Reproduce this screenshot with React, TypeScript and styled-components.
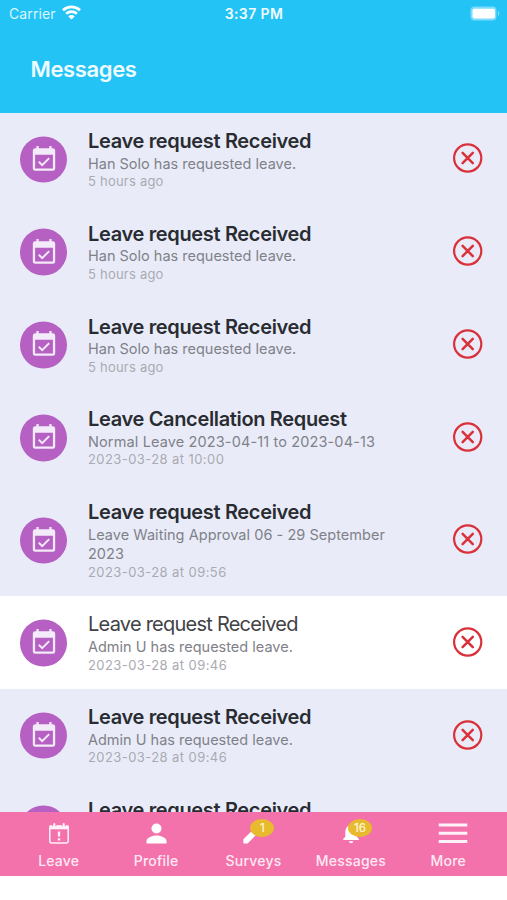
import React from "react";
import styled, { createGlobalStyle } from "styled-components";

const GlobalStyle = createGlobalStyle`
  * { box-sizing: border-box; }
  body { margin: 0; background: #fff; font-family: Inter, "Liberation Sans", sans-serif; }
`;

const Screen = styled.div`
  display: flex;
  flex-direction: column;
  width: 507px;
  height: 900px;
  overflow: hidden;
  background: #fff;
`;

const Header = styled.header`
  flex: none;
  height: 113px;
  background: #23c3f6;
  color: #fff;
`;

const StatusBar = styled.div`
  display: grid;
  grid-template-columns: 1fr auto 1fr;
  align-items: center;
  height: 28px;
  padding: 0 7px 0 9px;
`;

const Carrier = styled.div`
  display: flex;
  align-items: center;
  gap: 6px;
  font-size: 14px;
  line-height: 18px;
  letter-spacing: 0.12px;
  color: #d9f6ff;
  svg { margin-top: -3px; }
`;

const Clock = styled.div`
  margin-left: -1px;
  font-size: 14px;
  line-height: 18px;
  font-weight: 600;
  letter-spacing: 0.4px;
  color: #f1fcff;
`;

const Battery = styled.svg`
  justify-self: end;
  margin-top: -2px;
`;

const PageTitle = styled.h1`
  margin: 27px 0 0 30.5px;
  font-size: 22px;
  line-height: 28px;
  font-weight: 600;
  letter-spacing: -0.36px;
  color: #effcff;
`;

const List = styled.main`
  flex: none;
  height: 699.3px;
  overflow: hidden;
  background: #e9ecf8;
`;

const Row = styled.article<{ $read?: boolean }>`
  display: flex;
  align-items: center;
  padding: 16px 24px 15px 20.4px;
  background: ${(p) => (p.$read ? "#fff" : "#e9ecf8")};
`;

const Avatar = styled.div`
  flex: none;
  display: grid;
  place-items: center;
  width: 46.6px;
  height: 46.6px;
  margin-right: 21px;
  border-radius: 50%;
  background: #b560c2;
  transform: translateY(-0.5px);
  svg { margin-top: -2px; }
`;

const Body = styled.div`
  flex: none;
  width: 320px;
`;

const Title = styled.h2<{ $read?: boolean }>`
  margin: 0;
  font-size: 20px;
  line-height: 24px;
  font-weight: ${(p) => (p.$read ? 400 : 600)};
  letter-spacing: ${(p) => (p.$read ? "-0.76px" : "-0.34px")};
  color: ${(p) => (p.$read ? "#414246" : "#292c32")};
  white-space: nowrap;
`;

const Summary = styled.p<{ $tracking?: number }>`
  margin: 0;
  padding-top: 0.6px;
  font-size: 14.5px;
  line-height: 19.5px;
  letter-spacing: ${(p) => p.$tracking ?? 0}px;
  color: #808188;
`;

const Time = styled.div<{ $dated: boolean }>`
  font-size: 13px;
  line-height: 17.7px;
  letter-spacing: ${(p) => (p.$dated ? "0.42px" : "0.22px")};
  color: #a9aab2;
`;

const Dismiss = styled.button`
  display: block;
  width: 31px;
  height: 31px;
  margin-left: auto;
  padding: 0;
  border: 0;
  background: none;
  transform: translateY(-1.5px);
  svg { display: block; }
`;

const TabBar = styled.nav`
  flex: none;
  display: grid;
  grid-template-columns: repeat(5, 1fr);
  height: 63.4px;
  padding: 0 10px;
  background: #f372ab;
`;

const Tab = styled.div`
  display: flex;
  flex-direction: column;
  align-items: center;
`;

const TabIcon = styled.div<{ $shift?: number }>`
  position: relative;
  height: 38.7px;
  padding-top: 9px;
  margin-left: ${(p) => p.$shift ?? 0}px;
  svg { display: block; }
`;

const TabLabel = styled.span`
  font-size: 14px;
  line-height: 20px;
  font-weight: 500;
  letter-spacing: 0.22px;
  color: #ffe9f3;
`;

const Badge = styled.span`
  position: absolute;
  top: 7px;
  left: 8px;
  width: 24px;
  height: 18px;
  border-radius: 50%;
  background: #e8ba2d;
  color: #fff6d8;
  font-size: 11.5px;
  line-height: 18px;
  font-weight: 500;
  text-align: center;
`;

const WifiIcon = () => (
  <svg width="19" height="15" viewBox="0 0 19 15" fill="none" stroke="#fff" strokeWidth="2.7">
    <path d="M1 5.2C5.8.8 13.2.8 18 5.2" />
    <path d="M4.1 8.7c3.1-2.8 7.7-2.8 10.8 0" />
    <path d="M9.5 14.6 6.3 11.4c1.8-1.8 4.6-1.8 6.4 0z" fill="#fff" stroke="none" />
  </svg>
);

const BatteryIcon = () => (
  <Battery width="30" height="15" viewBox="0 0 30 15">
    <rect x="0.5" y="0.5" width="26" height="14" rx="4" fill="#7bdcfb" />
    <rect x="2.5" y="2.8" width="22.5" height="9.6" rx="2" fill="#fff" />
    <path d="M28 5v5c1.8-.8 1.8-4.2 0-5z" fill="#7bdcfb" />
  </Battery>
);

const CalendarCheckIcon = () => (
  <svg width="24" height="26" viewBox="0 0 24 26" fill="none">
    <path
      fill="#f3eafa"
      fillRule="evenodd"
      d="M4.4.5h2.3v2.3h10.6V.5h2.3v2.3h1.2a2.4 2.4 0 0 1 2.4 2.4v17.7a2.4 2.4 0 0 1-2.4 2.4H3.2a2.4 2.4 0 0 1-2.4-2.4V5.2a2.4 2.4 0 0 1 2.4-2.4h1.2zM3.1 9.2v13.7h17.8V9.2z"
    />
    <path d="m6.8 16.3 3.4 3.3 7-7" stroke="#f3eafa" strokeWidth="2" />
  </svg>
);

const CloseIcon = () => (
  <svg width="31" height="31" viewBox="0 0 31 31" fill="none" stroke="#d9303a" strokeWidth="2.2">
    <circle cx="15.7" cy="15.5" r="13.6" />
    <path d="m10.6 10.4 10.2 10.2m0-10.2L10.6 20.6" strokeWidth="2.5" strokeLinecap="round" />
  </svg>
);

const LeaveIcon = () => (
  <svg width="22" height="26" viewBox="0 0 22 26" fill="none">
    <rect x="1.8" y="5.1" width="18.4" height="16.8" rx="1.7" stroke="#fff2f8" strokeWidth="1.5" />
    <path d="M1.5 4.5h19v3.8h-19z" fill="#fff2f8" />
    <path d="M6.3 2.7v2.6M15.7 2.7v2.6" stroke="#f372ab" strokeWidth="4" />
    <path d="M6.3 3.2v2.4M15.7 3.2v2.4" stroke="#fff2f8" strokeWidth="2.2" strokeLinecap="round" />
    <path d="M11 10.5v5M11 17.3v2.2" stroke="#fff2f8" strokeWidth="2.3" />
  </svg>
);

const ProfileIcon = () => (
  <svg width="22" height="26" viewBox="0 0 22 26" fill="#fff">
    <circle cx="11.5" cy="7.5" r="5" />
    <path d="M1.5 22.5v-2.3c0-3.800 6.700-5.600 10-5.600s10 1.800 10 5.600v2.300z" />
  </svg>
);

const PencilIcon = () => (
  <svg width="22" height="26" viewBox="0 0 22 26" fill="#fff">
    <path d="M1.4 18.2 12.7 6.9l4.2 4.2L5.6 22.4H1.4z" />
    <path d="m14 5.6 2-2 4.2 4.2-2 2z" />
  </svg>
);

const BellIcon = () => (
  <svg width="22" height="26" viewBox="0 0 22 26" fill="#fff">
    <path d="M3.3 18.9v-1.1l2-2v-5c0-3.4 1.9-5.9 4.7-6.6V3.5h2.2v.7c2.8.7 4.6 3.2 4.6 6.6v5l2 2v1.1z" />
    <path d="M9 20.2h4.2c0 2.5-4.2 2.5-4.2 0z" />
  </svg>
);

const MenuIcon = () => (
  <svg width="30" height="26" viewBox="0 0 30 26" stroke="#fff2f8" strokeWidth="3">
    <path d="M.7 4h28.6M.7 12.3h28.6M.7 20.6h28.6" />
  </svg>
);

type Message = { title: string; summary: string; time: string; read?: boolean; tracking?: number };

const received = "Leave request Received";
const messages: Message[] = [
  { title: received, summary: "Han Solo has requested leave.", time: "5 hours ago" },
  { title: received, summary: "Han Solo has requested leave.", time: "5 hours ago" },
  { title: received, summary: "Han Solo has requested leave.", time: "5 hours ago" },
  {
    title: "Leave Cancellation Request",
    summary: "Normal Leave 2023-04-11 to 2023-04-13",
    time: "2023-03-28 at 10:00",
    tracking: 0.13,
  },
  {
    title: received,
    summary: "Leave Waiting Approval 06 - 29 September 2023",
    time: "2023-03-28 at 09:56",
    tracking: 0.04,
  },
  { title: received, summary: "Admin U has requested leave.", time: "2023-03-28 at 09:46", read: true },
  { title: received, summary: "Admin U has requested leave.", time: "2023-03-28 at 09:46" },
  { title: received, summary: "Admin U has requested leave.", time: "2023-03-28 at 09:46" },
];

type TabItem = { label: string; icon: React.ReactNode; badge?: number; shift?: number };

const tabs: TabItem[] = [
  { label: "Leave", icon: <LeaveIcon /> },
  { label: "Profile", icon: <ProfileIcon /> },
  { label: "Surveys", icon: <PencilIcon />, badge: 1 },
  { label: "Messages", icon: <BellIcon />, badge: 16 },
  { label: "More", icon: <MenuIcon />, shift: 9 },
];

export default function App() {
  return (
    <>
      <GlobalStyle />
      <Screen>
        <Header>
          <StatusBar>
            <Carrier>
              Carrier
              <WifiIcon />
            </Carrier>
            <Clock>3:37 PM</Clock>
            <BatteryIcon />
          </StatusBar>
          <PageTitle>Messages</PageTitle>
        </Header>
        <List>
          {messages.map((m, i) => (
            <Row key={i} $read={m.read}>
              <Avatar>
                <CalendarCheckIcon />
              </Avatar>
              <Body>
                <Title $read={m.read}>{m.title}</Title>
                <Summary $tracking={m.tracking}>{m.summary}</Summary>
                <Time $dated={m.time.includes("-")}>{m.time}</Time>
              </Body>
              <Dismiss aria-label="Dismiss">
                <CloseIcon />
              </Dismiss>
            </Row>
          ))}
        </List>
        <TabBar>
          {tabs.map((t) => (
            <Tab key={t.label}>
              <TabIcon $shift={t.shift}>
                {t.icon}
                {t.badge !== undefined && <Badge>{t.badge}</Badge>}
              </TabIcon>
              <TabLabel>{t.label}</TabLabel>
            </Tab>
          ))}
        </TabBar>
      </Screen>
    </>
  );
}
